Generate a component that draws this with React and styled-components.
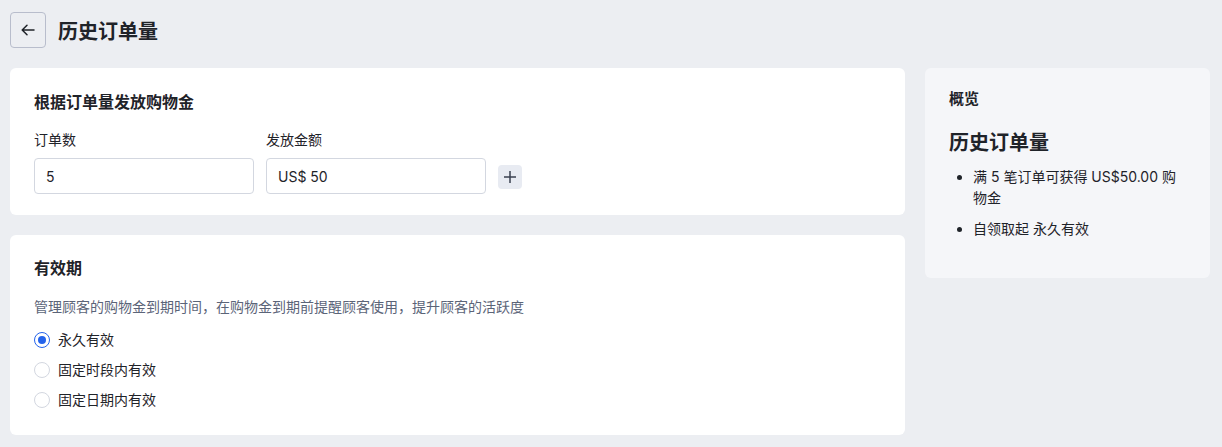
import React from "react";
import styled, { createGlobalStyle } from "styled-components";

const GlobalStyle = createGlobalStyle`
  html, body {
    margin: 0;
    padding: 0;
    background: #eceef2;
  }
  body {
    font-family: Inter, "Noto Sans CJK SC", "Noto Sans", sans-serif;
    color: #1f2329;
  }
  * { box-sizing: border-box; }
`;

const Page = styled.div`
  padding: 12px 12px 12px 10px;
  min-height: 447px;
`;

const Header = styled.div`
  display: flex;
  align-items: center;
  gap: 12px;
  height: 36px;
`;

const BackButton = styled.button`
  width: 36px;
  height: 36px;
  border: 1px solid #b8bdcc;
  border-radius: 4px;
  background: transparent;
  display: flex;
  align-items: center;
  justify-content: center;
  padding: 0;
  cursor: pointer;
`;

const PageTitle = styled.h1`
  margin: 0;
  font-size: 20px;
  font-weight: 700;
  color: #1f2329;
`;

const Layout = styled.div`
  display: grid;
  grid-template-columns: 895px 285px;
  gap: 20px;
  margin-top: 20px;
  align-items: start;
`;

const Column = styled.div`
  display: flex;
  flex-direction: column;
  gap: 20px;
`;

const Card = styled.section`
  background: ${(p) => (p.muted ? "#f5f6f9" : "#ffffff")};
  border-radius: 6px;
  padding: ${(p) => p.pad || "22px 24px 21px"};
`;

const CardTitle = styled.h2`
  margin: 0;
  font-size: ${(p) => p.size || "16px"};
  line-height: 24px;
  font-weight: 700;
  color: #1f2329;
`;

const FieldRow = styled.div`
  display: flex;
  align-items: flex-end;
  gap: 12px;
  margin-top: 16px;
`;

const Field = styled.label`
  display: flex;
  flex-direction: column;
  gap: 8px;
  width: 220px;
`;

const Label = styled.span`
  font-size: 14px;
  line-height: 20px;
  color: #1f2329;
`;

const Input = styled.input`
  height: 36px;
  width: 100%;
  border: 1px solid #d3d7e0;
  border-radius: 4px;
  padding: 0 11px;
  font-size: 14px;
  font-family: Inter, "Noto Sans CJK SC", sans-serif;
  color: #1f2329;
  outline: none;
`;

const AddButton = styled.button`
  width: 24px;
  height: 24px;
  margin-bottom: 5px;
  border: none;
  border-radius: 4px;
  background: #e8ebf2;
  display: flex;
  align-items: center;
  justify-content: center;
  padding: 0;
`;

const Description = styled.p`
  margin: 17px 0 0;
  font-size: 14px;
  line-height: 20px;
  color: #5b6478;
`;

const RadioList = styled.div`
  display: flex;
  flex-direction: column;
  gap: 10px;
  margin-top: 13px;
`;

const RadioItem = styled.label`
  display: flex;
  align-items: center;
  gap: 8px;
  font-size: 14px;
  line-height: 20px;
  color: #1f2329;
`;

const RadioDot = styled.span`
  width: 16px;
  height: 16px;
  border-radius: 50%;
  border: 1px solid ${(p) => (p.checked ? "#2463eb" : "#d3d7e0")};
  display: flex;
  align-items: center;
  justify-content: center;
  background: #fff;
  &::after {
    content: "";
    width: 8px;
    height: 8px;
    border-radius: 50%;
    background: ${(p) => (p.checked ? "#2463eb" : "transparent")};
  }
`;

const SummaryTitle = styled.h3`
  margin: 18px 0 0;
  font-size: 20px;
  line-height: 28px;
  font-weight: 600;
  color: #1f2329;
`;

const SummaryList = styled.ul`
  margin: 9px 0 0;
  padding-left: 24px;
  display: flex;
  flex-direction: column;
  gap: 10px;
  li {
    font-size: 14px;
    line-height: 21px;
    color: #1f2329;
  }
`;

const ArrowLeft = () => (
  <svg width="16" height="16" viewBox="0 0 16 16" fill="none">
    <path
      d="M14 8H2.5M7 3.2 2.2 8 7 12.8"
      stroke="#1f2329"
      strokeWidth="1.5"
      strokeLinecap="round"
      strokeLinejoin="round"
    />
  </svg>
);

const Plus = () => (
  <svg width="14" height="14" viewBox="0 0 14 14" fill="none">
    <path d="M7 1v12M1 7h12" stroke="#3a4150" strokeWidth="1.5" />
  </svg>
);

const options = ["永久有效", "固定时段内有效", "固定日期内有效"];

export default function App() {
  return (
    <>
      <GlobalStyle />
      <Page>
        <Header>
          <BackButton aria-label="返回">
            <ArrowLeft />
          </BackButton>
          <PageTitle>历史订单量</PageTitle>
        </Header>
        <Layout>
          <Column>
            <Card>
              <CardTitle>根据订单量发放购物金</CardTitle>
              <FieldRow>
                <Field>
                  <Label>订单数</Label>
                  <Input defaultValue="5" />
                </Field>
                <Field>
                  <Label>发放金额</Label>
                  <Input defaultValue="US$ 50" />
                </Field>
                <AddButton aria-label="添加">
                  <Plus />
                </AddButton>
              </FieldRow>
            </Card>
            <Card pad="21px 24px 25px">
              <CardTitle>有效期</CardTitle>
              <Description>
                管理顾客的购物金到期时间，在购物金到期前提醒顾客使用，提升顾客的活跃度
              </Description>
              <RadioList>
                {options.map((o, i) => (
                  <RadioItem key={o}>
                    <RadioDot checked={i === 0} />
                    {o}
                  </RadioItem>
                ))}
              </RadioList>
            </Card>
          </Column>
          <Card muted pad="19px 24px 39px">
            <CardTitle size="15px">概览</CardTitle>
            <SummaryTitle>历史订单量</SummaryTitle>
            <SummaryList>
              <li>满 5 笔订单可获得 US$50.00 购物金</li>
              <li>自领取起 永久有效</li>
            </SummaryList>
          </Card>
        </Layout>
      </Page>
    </>
  );
}
